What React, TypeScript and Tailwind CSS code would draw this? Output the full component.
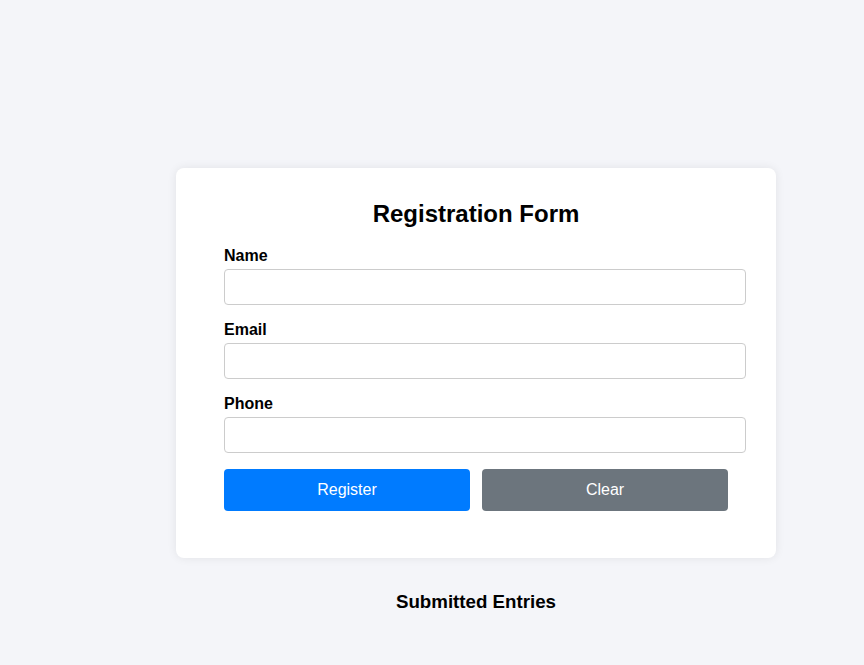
import React, { useState } from "react";

const fields = [
  { id: "name", label: "Name", type: "text" },
  { id: "email", label: "Email", type: "email" },
  { id: "phone", label: "Phone", type: "tel" },
];

const App = () => {
  const [values, setValues] = useState<Record<string, string>>({
    name: "",
    email: "",
    phone: "",
  });

  const clear = () => setValues({ name: "", email: "", phone: "" });

  return (
    <div
      className="min-h-screen w-full bg-[#f4f5f9] pt-[168px] pl-[176px]"
      style={{ fontFamily: '"Liberation Sans", Arial, sans-serif' }}
    >
      <div className="w-[600px]">
        {/* form card */}
        <div className="bg-white rounded-lg shadow-[0_0_10px_rgba(0,0,0,0.08)] px-[30px] pt-[32px] pb-[47px]">
          <h2 className="text-center text-[24px] font-bold text-black leading-[28px] mb-[18px]">
            Registration Form
          </h2>
          <form
            className="pl-[18px]"
            onSubmit={(e) => {
              e.preventDefault();
            }}
          >
            {fields.map((f) => (
              <div key={f.id} className="mb-[15px]">
                <label
                  htmlFor={f.id}
                  className="block text-[16px] font-bold text-black leading-[18px] pt-px mb-[4px]"
                >
                  {f.label}
                </label>
                <input
                  id={f.id}
                  type={f.type}
                  value={values[f.id]}
                  onChange={(e) =>
                    setValues({ ...values, [f.id]: e.target.value })
                  }
                  className="block w-full h-[36px] px-2 bg-white border border-[#cccccc] rounded-[4px] text-[16px] outline-none"
                />
              </div>
            ))}
            <div className="flex gap-[12px] pt-px">
              <button
                type="submit"
                className="w-[246px] h-[42px] rounded-[4px] bg-[#007bff] text-white text-[16px]"
              >
                Register
              </button>
              <button
                type="button"
                onClick={clear}
                className="w-[246px] h-[42px] rounded-[4px] bg-[#6c757d] text-white text-[16px]"
              >
                Clear
              </button>
            </div>
          </form>
        </div>
        <h3 className="text-center text-[18.72px] font-bold text-black leading-[22px] mt-[33px]">
          Submitted Entries
        </h3>
      </div>
    </div>
  );
};

export default App;
